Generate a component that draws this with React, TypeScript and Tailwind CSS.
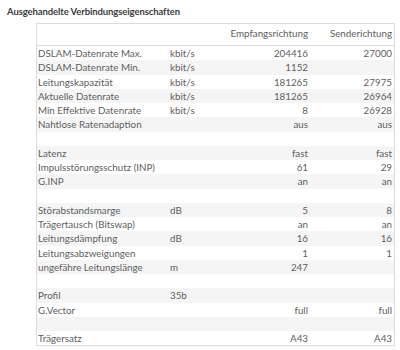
import React from 'react';

type Row = [string, string, string, string];

// label, unit, downstream, upstream; an all-empty row is a spacer
const ROWS: Row[] = [
  ['DSLAM-Datenrate Max.', 'kbit/s', '204416', '27000'],
  ['DSLAM-Datenrate Min.', 'kbit/s', '1152', ''],
  ['Leitungskapazität', 'kbit/s', '181265', '27975'],
  ['Aktuelle Datenrate', 'kbit/s', '181265', '26964'],
  ['Min Effektive Datenrate', 'kbit/s', '8', '26928'],
  ['Nahtlose Ratenadaption', '', 'aus', 'aus'],
  ['', '', '', ''],
  ['Latenz', '', 'fast', 'fast'],
  ['Impulsstörungsschutz (INP)', '', '61', '29'],
  ['G.INP', '', 'an', 'an'],
  ['', '', '', ''],
  ['Störabstandsmarge', 'dB', '5', '8'],
  ['Trägertausch (Bitswap)', '', 'an', 'an'],
  ['Leitungsdämpfung', 'dB', '16', '16'],
  ['Leitungsabzweigungen', '', '1', '1'],
  ['ungefähre Leitungslänge', 'm', '247', ''],
  ['', '', '', ''],
  ['Profil', '35b', '', ''],
  ['G.Vector', '', 'full', 'full'],
  ['', '', '', ''],
  ['Trägersatz', '', 'A43', 'A43'],
];

const COLS = 'grid grid-cols-[131px_62px_80px_1fr]';

export default function App() {
  return (
    <div className="w-[400px] h-[350px] bg-white font-['Lato',sans-serif] text-[#5e5e5e] overflow-hidden">
      <div className="pl-[7px] pt-[5px] h-[23px] text-[9.5px] tracking-[-0.1px] font-bold text-[#3c3c3c] leading-[14px]">
        Ausgehandelte Verbindungseigenschaften
      </div>
      <div className="ml-[36px] w-[359px] border border-[#dcdcdc] text-[9.8px]">
        <div className={`${COLS} h-[22px] items-end pb-[4px] border-b border-[#dcdcdc]`}>
          <div />
          <div />
          <div className="text-right pr-[2px]">Empfangsrichtung</div>
          <div className="text-right pr-[2px]">Senderichtung</div>
        </div>
        {ROWS.map((r, i) => (
          <div
            key={i}
            className={`${COLS} h-[14.25px] items-center leading-[14px] ${i % 2 === 1 ? 'bg-[#f5f5f5]' : 'bg-white'}`}
          >
            <div className="pl-[1px] whitespace-nowrap">{r[0]}</div>
            <div className="pl-[2px]">{r[1]}</div>
            <div className="text-right pr-[2px]">{r[2]}</div>
            <div className="text-right pr-[2px]">{r[3]}</div>
          </div>
        ))}
      </div>
    </div>
  );
}
